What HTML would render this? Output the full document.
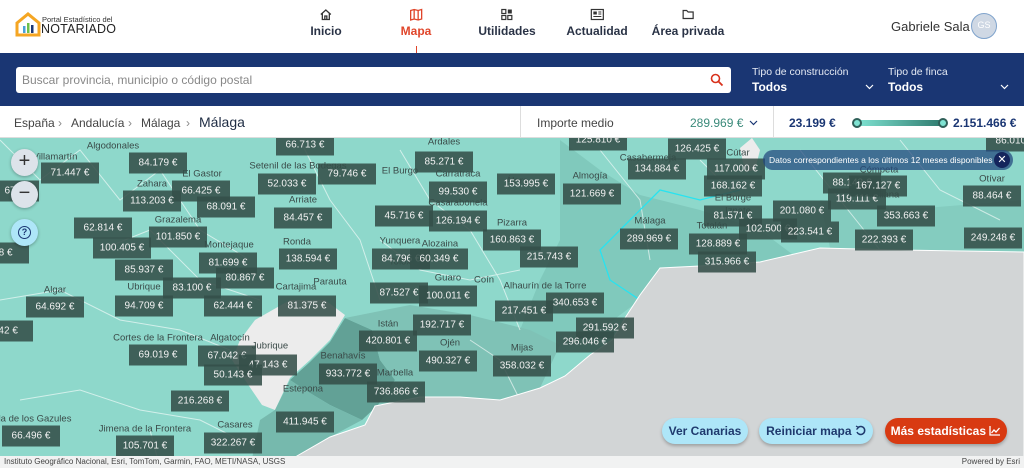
<!DOCTYPE html>
<html><head><meta charset="utf-8"><style>
*{margin:0;padding:0;box-sizing:border-box}
body{width:1024px;height:468px;overflow:hidden;font-family:"Liberation Sans",sans-serif;background:#fff;position:relative}
.hdr{position:absolute;left:0;top:0;width:1024px;height:53px;background:#fff}
.nav{position:absolute;top:8px;text-align:center;font-size:12px;font-weight:bold;color:#2a3346;transform:translateX(-50%)}
.nav svg{display:block;margin:0 auto 3px}
.bar{position:absolute;left:0;top:53px;width:1024px;height:53px;background:#1a3673}
.srch{position:absolute;left:16px;top:67px;width:715px;height:26px;background:#fff;border-radius:3px;font-size:12px;color:#888;padding:6px 6px}
.sel{position:absolute;top:66px;color:#fff}
.sel .l{font-size:10.5px;color:#e4e9f3}
.sel .v{font-size:12px;font-weight:bold;margin-top:2px}
.bc{position:absolute;left:0;top:106px;width:1024px;height:32px;background:#fff;border-bottom:1px solid #ddd}
.bc span{position:absolute;top:10px;font-size:12px;color:#444}
.map{position:absolute;left:0;top:138px;width:1024px;height:330px;background:#8ed8cb;overflow:hidden}
.p{position:absolute;background:rgba(52,78,73,.88);color:#f2f2f2;font-size:10px;width:58px;height:21px;line-height:21px;text-align:center;transform:translate(-50%,-50%)}
.t{position:absolute;font-size:9.5px;color:#3a4a48;transform:translate(-50%,-50%)}
.btn{position:absolute;top:418px;height:26px;border-radius:13px;font-size:12px;font-weight:bold;line-height:26px;text-align:center;box-shadow:0 2px 3px rgba(0,0,0,.25)}
.zb{position:absolute;z-index:5}
</style></head><body>
<div class="hdr">
<svg style="position:absolute;left:15px;top:11px" width="26" height="26" viewBox="0 0 26 26"><path d="M2 12 L13 3 L24 12 V24 H2 Z" fill="none" stroke="#f5a623" stroke-width="3"/><rect x="8" y="15" width="2.5" height="7" fill="#4aa0d8"/><rect x="12" y="12" width="2.5" height="10" fill="#6cc04a"/><rect x="16" y="14" width="2.5" height="8" fill="#1a3673"/></svg>
<div style="position:absolute;left:42px;top:15px;font-size:7.5px;color:#333">Portal Estadístico del</div>
<div style="position:absolute;left:41px;top:22px;font-size:12.5px;color:#222;letter-spacing:.2px">NOTARIADO</div>
<div class="nav" style="left:326px"><svg width="13" height="13" viewBox="0 0 13 13"><path d="M1.5 6.5 L6.5 2 L11.5 6.5 M3 5.5 V11.5 H10 V5.5 M5.5 11.5 V8 H7.5 V11.5" fill="none" stroke="#333" stroke-width="1.3"/></svg>Inicio</div>
<div class="nav" style="left:416px;color:#e0452a"><svg width="13" height="13" viewBox="0 0 13 13"><path d="M1 2.5 L4.5 1.5 L8.5 2.5 L12 1.5 V11 L8.5 12 L4.5 11 L1 12 Z M4.5 1.5 V11 M8.5 2.5 V12" fill="none" stroke="#e0452a" stroke-width="1.3"/></svg>Mapa</div>
<div style="position:absolute;left:416px;top:46px;width:1px;height:7px;background:#e0452a"></div>
<div class="nav" style="left:507px"><svg width="13" height="13" viewBox="0 0 13 13"><rect x="1.5" y="1.5" width="4" height="4" fill="none" stroke="#333" stroke-width="1.2"/><rect x="7.5" y="1.5" width="4" height="4" fill="#333"/><rect x="1.5" y="7.5" width="4" height="4" fill="none" stroke="#333" stroke-width="1.2"/><rect x="7.5" y="7.5" width="4" height="4" fill="none" stroke="#333" stroke-width="1.2"/></svg>Utilidades</div>
<div class="nav" style="left:597px"><svg width="14" height="13" viewBox="0 0 14 13"><rect x="1" y="1.5" width="12" height="10" fill="none" stroke="#333" stroke-width="1.2"/><rect x="3" y="3.5" width="3.5" height="3" fill="#333"/><path d="M8 4 H11 M8 6 H11 M3 8.5 H11" stroke="#333"/></svg>Actualidad</div>
<div class="nav" style="left:688px"><svg width="13" height="13" viewBox="0 0 13 13"><path d="M1.5 2.5 H5 L6.5 4 H11.5 V10.5 H1.5 Z" fill="none" stroke="#333" stroke-width="1.2"/></svg>Área privada</div>
<div style="position:absolute;left:891px;top:19px;font-size:13px;color:#333">Gabriele Sala</div>
<div style="position:absolute;left:971px;top:13px;width:26px;height:26px;border-radius:50%;background:#cfd8e4;border:1.5px solid #7fa3cc;color:#fff;font-size:9px;text-align:center;line-height:23px">GS</div>
</div>
<div class="bar"></div>
<div class="srch">Buscar provincia, municipio o código postal</div>
<svg style="position:absolute;left:710px;top:73px" width="14" height="14" viewBox="0 0 14 14"><circle cx="5.5" cy="5.5" r="4" fill="none" stroke="#d8321c" stroke-width="1.6"/><path d="M8.5 8.5 L12.5 12.5" stroke="#d8321c" stroke-width="1.8"/></svg>
<div class="sel" style="left:752px"><div class="l">Tipo de construcción</div><div class="v">Todos</div></div>
<div class="sel" style="left:888px"><div class="l">Tipo de finca</div><div class="v">Todos</div></div>
<svg style="position:absolute;left:865px;top:84px" width="9" height="6"><path d="M1 1 L4.5 4.5 L8 1" fill="none" stroke="#fff" stroke-width="1.2"/></svg>
<svg style="position:absolute;left:1000px;top:84px" width="9" height="6"><path d="M1 1 L4.5 4.5 L8 1" fill="none" stroke="#fff" stroke-width="1.2"/></svg>
<div class="bc">
<span style="left:14px">España</span><span style="left:58px;color:#888">›</span>
<span style="left:71px">Andalucía</span><span style="left:128px;color:#888">›</span>
<span style="left:141px">Málaga</span><span style="left:186px;color:#888">›</span>
<span style="left:199px;top:8px;font-size:14px;color:#1f2d44">Málaga</span>
<div style="position:absolute;left:520px;top:0;width:1px;height:32px;background:#ddd"></div>
<div style="position:absolute;left:773px;top:0;width:1px;height:32px;background:#ddd"></div>
<span style="left:537px">Importe medio</span>
<span style="left:690px;color:#3a8a7a">289.969 €</span>
<svg style="position:absolute;left:749px;top:14px" width="9" height="6"><path d="M1 1 L4.5 4.5 L8 1" fill="none" stroke="#1a3673" stroke-width="1.2"/></svg>
<span style="left:789px;color:#1a3673;font-weight:bold">23.199 €</span>
<div style="position:absolute;left:857px;top:14px;width:86px;height:6px;border-radius:3px;background:linear-gradient(90deg,#7fe3d2,#2f7a6e)"></div>
<div style="position:absolute;left:852px;top:12px;width:10px;height:10px;border-radius:50%;background:#7fe3d2;border:2.5px solid #2f5f58"></div>
<div style="position:absolute;left:938px;top:12px;width:10px;height:10px;border-radius:50%;background:#7fe3d2;border:2.5px solid #2f5f58"></div>
<span style="left:953px;color:#1a3673;font-weight:bold">2.151.466 €</span>
</div>
<div class="map">
<svg width="1024" height="330" style="position:absolute;left:0;top:0">
<g transform="translate(0,-138)">
<path d="M560 140 L600 170 L640 195 L700 210 L760 230 L800 260 L700 270 L640 300 L600 330 L560 345 L520 330 L540 280 L560 240 Z" fill="#80c9bc"/>
<path d="M820 200 L900 210 L1024 200 L1024 252 L900 250 L830 248 Z" fill="#84ccbf"/>
<path d="M255 320 L290 300 L325 300 L345 315 L330 340 L310 360 L290 378 L275 410 L262 405 L245 380 L232 360 L240 340 Z" fill="#ececec"/>
<path d="M740 148 L752 138 L760 150 L755 170 L745 172 Z" fill="#ececec"/>
<path d="M345 318 L372 330 L380 360 L395 380 L378 405 L362 420 L330 405 L305 390 L290 380 L310 362 L330 342 Z" fill="#62a196"/>
<path d="M345 318 L410 305 L470 315 L530 330 L560 345 L540 388 L500 400 L460 397 L420 397 L378 405 L395 380 L380 360 L372 330 Z" fill="#7fc2b6"/>
<path d="M290 380 L305 390 L330 405 L362 420 L330 437 L300 455 L270 468 L250 468 L260 420 L275 410 Z" fill="#76b9ad"/>
<path d="M0 140 L40 180 L80 150 L120 200 L160 170 L200 230 L250 260 M100 250 L150 230 L200 280 L260 300 M400 150 L430 200 L470 230 L500 280 L520 330 M380 240 L420 270 L470 280 L520 270 M0 300 L60 290 L120 320 L180 330 L230 350 M20 400 L80 390 L140 410 L200 420 L240 440 M600 150 L640 200 L650 260 M700 160 L740 200 M800 150 L840 200 L880 250 M900 140 L940 190 L1000 220 M300 140 L330 200 L360 240 L380 300 M150 430 L160 468 M470 340 L500 360 L520 400" fill="none" stroke="#ffffff" stroke-opacity=".6" stroke-width="1"/>
<path d="M640 300 L625 290 L610 280 L600 250 L630 220 L660 190 L700 200 L740 190" fill="none" stroke="#27e3f0" stroke-width="1.3"/>
<path d="M1024 252 L900 250 L820 248 L760 262 L700 266 L660 268 L640 295 L625 318 L612 340 L590 355 L565 376 L540 388 L500 400 L460 397 L420 397 L375 406 L365 425 L330 437 L290 460 L280 468 L1024 468 Z" fill="#d2d5d6" stroke="#fff" stroke-width="1"/>
</g></svg>
<div class="t" style="left:113px;top:8px">Algodonales</div>
<div class="t" style="left:55px;top:19px">Villamartín</div>
<div class="t" style="left:298px;top:28px">Setenil de las Bodegas</div>
<div class="t" style="left:202px;top:36px">El Gastor</div>
<div class="t" style="left:152px;top:46px">Zahara</div>
<div class="t" style="left:303px;top:62px">Arriate</div>
<div class="t" style="left:178px;top:82px">Grazalema</div>
<div class="t" style="left:229px;top:107px">Montejaque</div>
<div class="t" style="left:297px;top:104px">Ronda</div>
<div class="t" style="left:144px;top:149px">Ubrique</div>
<div class="t" style="left:55px;top:152px">Algar</div>
<div class="t" style="left:296px;top:149px">Cartajima</div>
<div class="t" style="left:330px;top:144px">Parauta</div>
<div class="t" style="left:444px;top:4px">Ardales</div>
<div class="t" style="left:458px;top:36px">Carratraca</div>
<div class="t" style="left:458px;top:65px">Casarabonela</div>
<div class="t" style="left:400px;top:33px">El Burgo</div>
<div class="t" style="left:400px;top:103px">Yunquera</div>
<div class="t" style="left:440px;top:106px">Alozaina</div>
<div class="t" style="left:400px;top:124px">Tolox</div>
<div class="t" style="left:448px;top:140px">Guaro</div>
<div class="t" style="left:484px;top:142px">Coín</div>
<div class="t" style="left:517px;top:43px">Álora</div>
<div class="t" style="left:512px;top:85px">Pizarra</div>
<div class="t" style="left:590px;top:38px">Almogía</div>
<div class="t" style="left:648px;top:20px">Casabermeja</div>
<div class="t" style="left:650px;top:83px">Málaga</div>
<div class="t" style="left:738px;top:15px">Cútar</div>
<div class="t" style="left:733px;top:60px">El Borge</div>
<div class="t" style="left:545px;top:148px">Alhaurín de la Torre</div>
<div class="t" style="left:158px;top:200px">Cortes de la Frontera</div>
<div class="t" style="left:230px;top:200px">Algatocín</div>
<div class="t" style="left:270px;top:208px">Jubrique</div>
<div class="t" style="left:388px;top:186px">Istán</div>
<div class="t" style="left:450px;top:205px">Ojén</div>
<div class="t" style="left:522px;top:210px">Mijas</div>
<div class="t" style="left:343px;top:218px">Benahavís</div>
<div class="t" style="left:395px;top:235px">Marbella</div>
<div class="t" style="left:303px;top:251px">Estepona</div>
<div class="t" style="left:235px;top:287px">Casares</div>
<div class="t" style="left:145px;top:291px">Jimena de la Frontera</div>
<div class="t" style="left:30px;top:281px">cala de los Gazules</div>
<div class="t" style="left:992px;top:41px">Otívar</div>
<div class="t" style="left:879px;top:32px">Cómpeta</div>
<div class="t" style="left:880px;top:57px">Frigiliana</div>
<div class="t" style="left:738px;top:73px">Iznate</div>
<div class="t" style="left:712px;top:88px">Totalán</div>
<div class="p" style="left:305px;top:7px">66.713 €</div>
<div class="p" style="left:158px;top:25px">84.179 €</div>
<div class="p" style="left:70px;top:35px">71.447 €</div>
<div class="p" style="left:347px;top:36px">79.746 €</div>
<div class="p" style="left:444px;top:24px">85.271 €</div>
<div class="p" style="left:201px;top:53px">66.425 €</div>
<div class="p" style="left:152px;top:63px">113.203 €</div>
<div class="p" style="left:287px;top:46px">52.033 €</div>
<div class="p" style="left:226px;top:69px">68.091 €</div>
<div class="p" style="left:458px;top:54px">99.530 €</div>
<div class="p" style="left:526px;top:46px">153.995 €</div>
<div class="p" style="left:592px;top:56px">121.669 €</div>
<div class="p" style="left:657px;top:31px">134.884 €</div>
<div class="p" style="left:697px;top:11px">126.425 €</div>
<div class="p" style="left:598px;top:2px">125.810 €</div>
<div class="p" style="left:736px;top:31px">117.000 €</div>
<div class="p" style="left:733px;top:48px">168.162 €</div>
<div class="p" style="left:303px;top:80px">84.457 €</div>
<div class="p" style="left:404px;top:78px">45.716 €</div>
<div class="p" style="left:458px;top:83px">126.194 €</div>
<div class="p" style="left:103px;top:90px">62.814 €</div>
<div class="p" style="left:122px;top:110px">100.405 €</div>
<div class="p" style="left:178px;top:99px">101.850 €</div>
<div class="p" style="left:733px;top:78px">81.571 €</div>
<div class="p" style="left:768px;top:91px">102.500 €</div>
<div class="p" style="left:802px;top:73px">201.080 €</div>
<div class="p" style="left:810px;top:94px">223.541 €</div>
<div class="p" style="left:852px;top:45px">88.143 €</div>
<div class="p" style="left:857px;top:61px">119.111 €</div>
<div class="p" style="left:878px;top:48px">167.127 €</div>
<div class="p" style="left:992px;top:58px">88.464 €</div>
<div class="p" style="left:906px;top:78px">353.663 €</div>
<div class="p" style="left:884px;top:102px">222.393 €</div>
<div class="p" style="left:993px;top:100px">249.248 €</div>
<div class="p" style="left:718px;top:106px">128.889 €</div>
<div class="p" style="left:727px;top:124px">315.966 €</div>
<div class="p" style="left:649px;top:101px">289.969 €</div>
<div class="p" style="left:512px;top:102px">160.863 €</div>
<div class="p" style="left:549px;top:119px">215.743 €</div>
<div class="p" style="left:308px;top:121px">138.594 €</div>
<div class="p" style="left:401px;top:121px">84.796 €</div>
<div class="p" style="left:439px;top:121px">60.349 €</div>
<div class="p" style="left:228px;top:125px">81.699 €</div>
<div class="p" style="left:245px;top:140px">80.867 €</div>
<div class="p" style="left:144px;top:132px">85.937 €</div>
<div class="p" style="left:192px;top:150px">83.100 €</div>
<div class="p" style="left:399px;top:155px">87.527 €</div>
<div class="p" style="left:448px;top:158px">100.011 €</div>
<div class="p" style="left:575px;top:165px">340.653 €</div>
<div class="p" style="left:233px;top:168px">62.444 €</div>
<div class="p" style="left:307px;top:168px">81.375 €</div>
<div class="p" style="left:144px;top:168px">94.709 €</div>
<div class="p" style="left:55px;top:169px">64.692 €</div>
<div class="p" style="left:524px;top:173px">217.451 €</div>
<div class="p" style="left:442px;top:187px">192.717 €</div>
<div class="p" style="left:605px;top:190px">291.592 €</div>
<div class="p" style="left:585px;top:204px">296.046 €</div>
<div class="p" style="left:227px;top:218px">67.042 €</div>
<div class="p" style="left:268px;top:227px">47.143 €</div>
<div class="p" style="left:158px;top:217px">69.019 €</div>
<div class="p" style="left:388px;top:203px">420.801 €</div>
<div class="p" style="left:448px;top:223px">490.327 €</div>
<div class="p" style="left:522px;top:228px">358.032 €</div>
<div class="p" style="left:233px;top:237px">50.143 €</div>
<div class="p" style="left:348px;top:236px">933.772 €</div>
<div class="p" style="left:396px;top:254px">736.866 €</div>
<div class="p" style="left:200px;top:263px">216.268 €</div>
<div class="p" style="left:305px;top:284px">411.945 €</div>
<div class="p" style="left:233px;top:305px">322.267 €</div>
<div class="p" style="left:145px;top:308px">105.701 €</div>
<div class="p" style="left:31px;top:298px">66.496 €</div>
<div class="p" style="left:4px;top:193px">.842 €</div>
<div class="p" style="left:0px;top:115px">818 €</div>
<div class="p" style="left:10px;top:53px">67</div>
<div class="p" style="left:1015px;top:3px">86.010 €</div>
<div class="zb" style="left:11px;top:11px;width:27px;height:27px;border-radius:50%;background:#dde3ea;box-shadow:0 1px 3px rgba(0,0,0,.3);text-align:center;line-height:25px;font-size:20px;color:#333">+</div>
<div class="zb" style="left:11px;top:43px;width:27px;height:27px;border-radius:50%;background:#dde3ea;box-shadow:0 1px 3px rgba(0,0,0,.3);text-align:center;line-height:25px;font-size:20px;color:#333">−</div>
<div class="zb" style="left:11px;top:81px;width:27px;height:27px;border-radius:50%;background:#aee6f8;box-shadow:0 1px 3px rgba(0,0,0,.3)"><div style="margin:7px auto;width:13px;height:13px;border:1.5px solid #1a3673;border-radius:50%;font-size:9px;font-weight:bold;color:#1a3673;text-align:center;line-height:10px">?</div></div>
<div class="zb" style="left:763px;top:12px;width:250px;height:20px;border-radius:10px;background:rgba(35,70,125,.72);color:#fff;font-size:8.5px;line-height:20px;padding-left:6px">Datos correspondientes a los últimos 12 meses disponibles</div>
<div class="zb" style="left:994px;top:14px;width:16px;height:16px;border-radius:50%;background:#14245c;color:#fff;font-size:11px;text-align:center;line-height:16px">✕</div>
</div>
<div style="position:absolute;left:0;top:456px;width:1024px;height:12px;background:#f1f2f2;font-size:8px;color:#444;line-height:12px;padding-left:4px">Instituto Geográfico Nacional, Esri, TomTom, Garmin, FAO, METI/NASA, USGS<span style="position:absolute;right:4px">Powered by Esri</span></div>
<div class="btn" style="left:662px;width:86px;background:#aee6f8;color:#1f3a6e">Ver Canarias</div>
<div class="btn" style="left:759px;width:114px;background:#aee6f8;color:#1f3a6e">Reiniciar mapa <svg width="11" height="11" viewBox="0 0 11 11" style="vertical-align:-1px"><path d="M3 2.5 A4 4 0 1 1 2 7" fill="none" stroke="#1f3a6e" stroke-width="1.5"/><path d="M1 1 L3.5 2.5 L1.5 4.5" fill="none" stroke="#1f3a6e" stroke-width="1.3"/></svg></div>
<div class="btn" style="left:885px;width:122px;background:#d83a12;color:#fff">Más estadísticas <svg width="12" height="11" viewBox="0 0 12 11" style="vertical-align:-1px"><path d="M1 1 V10 H11 M2.5 8 L5 5 L7 7 L10.5 3" fill="none" stroke="#fff" stroke-width="1.3"/></svg></div>
</body></html>
